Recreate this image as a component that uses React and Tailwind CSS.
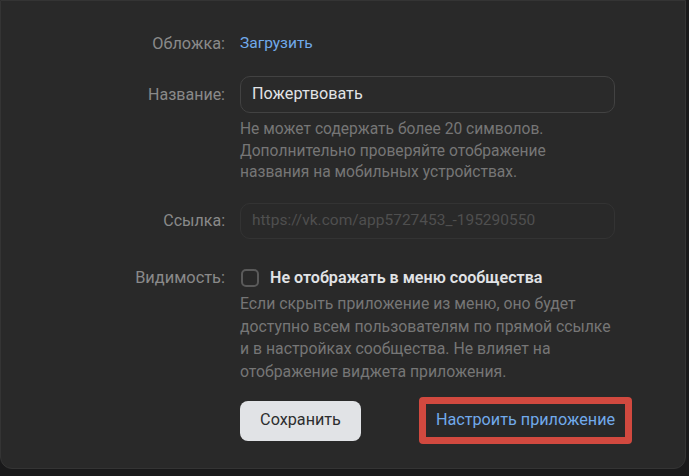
export default function App() {
  const font = { fontFamily: "Roboto, 'Noto Sans', sans-serif" };
  return (
    <div className="w-[689px] h-[476px] bg-[#19191a] overflow-hidden" style={font}>
      <div className="w-[686px] h-[469px] bg-[#292929] border-l border-r border-b border-t border-[#343434] rounded-b-[12px] pt-[32px]">
        <div className="flex flex-col text-[16px]">
          {/* Cover */}
          <div className="flex items-center h-[22px]">
            <div className="w-[224px] text-right text-[#8a8a8a] text-[16.3px]">Обложка:</div>
            <div className="ml-[15px] text-[#71aaeb] text-[15.5px]">Загрузить</div>
          </div>
          {/* Name */}
          <div className="flex items-center mt-[21px]">
            <div className="w-[224px] text-right text-[#8a8a8a]">Название:</div>
            <div className="ml-[15px] w-[375px] h-[37px] rounded-[10px] border border-[#424242] bg-[#2a2a2a] flex items-center px-[11px] text-[#e1e3e6] text-[16.2px]">
              Пожертвовать
            </div>
          </div>
          <div className="ml-[239px] mt-[6px] text-[#767676] text-[15.6px] leading-[21.5px]">
            Не может содержать более 20 символов.
            <br />
            Дополнительно проверяйте отображение
            <br />
            названия на мобильных устройствах.
          </div>
          {/* Link */}
          <div className="flex items-center mt-[19px]">
            <div className="w-[224px] text-right text-[#8a8a8a]">Ссылка:</div>
            <div className="ml-[15px] w-[375px] h-[36px] rounded-[10px] border border-[#333333] flex items-center px-[11px] text-[#4f4f4f] text-[15.5px]">
              https://vk.com/app5727453_-195290550
            </div>
          </div>
          {/* Visibility */}
          <div className="flex items-center mt-[27px]">
            <div className="w-[224px] text-right text-[#8a8a8a] text-[16.4px]">Видимость:</div>
            <div className="ml-[16px] w-[18px] h-[18px] rounded-[5px] border-2 border-[#5a5a5a]" />
            <div className="ml-[11px] text-[#e1e3e6] font-semibold text-[16.1px]">Не отображать в меню сообщества</div>
          </div>
          <div className="ml-[239px] mt-[3px] text-[#767676] text-[15.8px] leading-[22.5px]">
            Если скрыть приложение из меню, оно будет
            <br />
            доступно всем пользователям по прямой ссылке
            <br />
            и в настройках сообщества. Не влияет на
            <br />
            отображение виджета приложения.
          </div>
          {/* Buttons */}
          <div className="flex items-center ml-[239px] mt-[14px]">
            <div className="w-[121px] h-[40px] rounded-[8px] bg-[#e1e3e6] text-[#2c2d2e] flex items-center justify-center text-[16.2px]">
              Сохранить
            </div>
            <div className="ml-[58px] w-[213px] h-[47px] rounded-[4px] border-[7px] border-[#d1493f] flex items-center justify-center text-[#71aaeb] text-[16.2px]">
              Настроить приложение
            </div>
          </div>
        </div>
      </div>
    </div>
  );
}
